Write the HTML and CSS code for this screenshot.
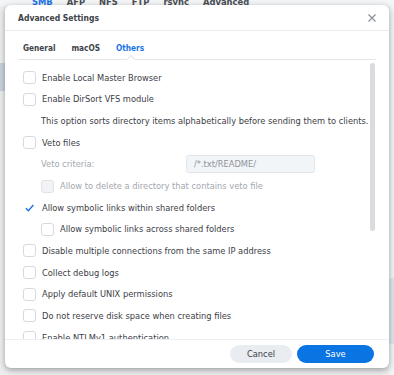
FILE: index.html
```html
<!DOCTYPE html>
<html>
<head>
<meta charset="utf-8">
<link rel="stylesheet" href="styles.css">
</head>
<body>
<div class="page">
  <div class="bg-tabs">
    <span class="bg-tab active">SMB</span><span class="bg-tab">AFP</span><span class="bg-tab">NFS</span><span class="bg-tab">FTP</span><span class="bg-tab">rsync</span><span class="bg-tab">Advanced</span>
  </div>
  <div class="bg-body">
    <div class="bg-side"></div>
    <div class="bg-right"><div class="bg-band"></div></div>
  </div>
</div>
<div class="dialog">
  <div class="dlg-header">
    <span class="dlg-title">Advanced Settings</span>
    <svg class="close" width="10" height="10" viewBox="0 0 10 10"><path d="M1.5 1.5L8.5 8.5M8.5 1.5L1.5 8.5" stroke="#8a9097" stroke-width="1.2" fill="none"/></svg>
  </div>
  <div class="tabs">
    <span class="tab">General</span>
    <span class="tab">macOS</span>
    <span class="tab active">Others</span>
  </div>
  <div class="tabline"><span class="notch"></span></div>
  <div class="content">
    <div class="row"><span class="cb"></span><span>Enable Local Master Browser</span></div>
    <div class="row"><span class="cb"></span><span>Enable DirSort VFS module</span></div>
    <div class="row indent"><span>This option sorts directory items alphabetically before sending them to clients.</span></div>
    <div class="row"><span class="cb"></span><span>Veto files</span></div>
    <div class="row indent field"><span class="muted label">Veto criteria:</span><span class="input">/*.txt/README/</span></div>
    <div class="row indent"><span class="cb disabled"></span><span class="muted">Allow to delete a directory that contains veto file</span></div>
    <div class="row"><span class="cb checked"><svg width="12" height="12" viewBox="0 0 12 12"><path d="M2 6.2L4.8 9L10.2 2.8" stroke="#1a73e8" stroke-width="1.5" fill="none"/></svg></span><span>Allow symbolic links within shared folders</span></div>
    <div class="row indent"><span class="cb"></span><span>Allow symbolic links across shared folders</span></div>
    <div class="row"><span class="cb"></span><span>Disable multiple connections from the same IP address</span></div>
    <div class="row"><span class="cb"></span><span>Collect debug logs</span></div>
    <div class="row"><span class="cb"></span><span>Apply default UNIX permissions</span></div>
    <div class="row"><span class="cb"></span><span>Do not reserve disk space when creating files</span></div>
    <div class="row"><span class="cb"></span><span>Enable NTLMv1 authentication</span></div>
    <div class="scrollthumb"></div>
  </div>
  <div class="footer">
    <button class="btn cancel">Cancel</button>
    <button class="btn save">Save</button>
  </div>
</div>
</body>
</html>
```
FILE: styles.css
```css
html, body {
  margin: 0;
  padding: 0;
}
body {
  width: 394px;
  height: 375px;
  overflow: hidden;
  background: #e4e5e7;
  font-family: "DejaVu Sans", Verdana, sans-serif;
  position: relative;
}
.page {
  height: 375px;
  background: #eceef0;
  display: flex;
  flex-direction: column;
}
.bg-tabs {
  display: flex;
  gap: 14px;
  height: 6px;
  overflow: hidden;
  padding-left: 32px;
  background: #f4f5f6;
  font-family: "DejaVu Sans", sans-serif;
  font-size: 8.4px;
  font-weight: bold;
  line-height: 5px;
  color: #4a4f55;
  flex: none;
}
.bg-tab.active {
  color: #1a73e8;
}
.bg-body {
  flex: 1;
  display: flex;
  justify-content: space-between;
}
.bg-side {
  width: 5px;
  height: 28px;
  margin-top: 57px;
  background: #c9d2dc;
}
.bg-right {
  width: 5px;
  background: #f2f3f5;
  padding-top: 272px;
}
.bg-band {
  height: 66px;
  background: #dfe5ec;
}
.dialog {
  position: absolute;
  left: 5px;
  top: 5px;
  width: 384px;
  height: 363px;
  background: #fff;
  border-radius: 6px;
  box-shadow: 0 2px 6px rgba(0,0,0,0.35);
  display: flex;
  flex-direction: column;
  overflow: hidden;
}
.dlg-header {
  height: 25px;
  flex: none;
  display: flex;
  align-items: center;
  justify-content: space-between;
  padding: 0 13px 0 13px;
  border-bottom: 1px solid #e8ebf0;
}
.dlg-title {
  font-family: "DejaVu Sans Condensed", "DejaVu Sans", sans-serif;
  font-size: 8.5px;
  font-weight: bold;
  color: #3d4248;
}
.close {
  margin-right: -1px;
}
.tabs {
  display: flex;
  gap: 16px;
  padding: 0 18px;
  height: 28px;
  align-items: center;
  flex: none;
  padding-top: 5px;
  box-sizing: border-box;
}
.tab {
  font-family: "DejaVu Sans Condensed", "DejaVu Sans", sans-serif;
  font-size: 8.2px;
  font-weight: bold;
  color: #3d4248;
}
.tab.active {
  color: #1a73e8;
}
.tabline {
  height: 1px;
  margin: 0 13px;
  background: #e3e7ec;
  position: relative;
  flex: none;
}
.notch {
  position: absolute;
  left: 110px;
  top: -3px;
  width: 5px;
  height: 5px;
  background: #fff;
  border-left: 1px solid #e3e7ec;
  border-top: 1px solid #e3e7ec;
  transform: rotate(45deg);
}
.content {
  flex: 1;
  position: relative;
  overflow: hidden;
  padding-top: 7px;
  border-bottom: 1px solid #eceff3;
}
.row {
  height: 21.65px;
  display: flex;
  align-items: center;
  padding-left: 18px;
  font-size: 8.3px;
  color: #3b4046;
  white-space: nowrap;
}
.row.indent {
  padding-left: 36px;
}
.cb {
  width: 11px;
  height: 11px;
  border: 1px solid #d6dae0;
  border-radius: 3px;
  margin-right: 6px;
  flex: none;
  background: #fff;
  display: flex;
  align-items: center;
  justify-content: center;
}
.cb.disabled {
  background: #f1f3f6;
  border-color: #dfe3e8;
}
.cb.checked {
  border-color: transparent;
}
.muted {
  color: #a3a8ae;
}
.label {
  width: 145px;
}
.input {
  width: 120px;
  height: 16px;
  line-height: 16px;
  padding-left: 7px;
  background: #f2f5f8;
  border: 1px solid #e1e6eb;
  border-radius: 3px;
  color: #8d939a;
}
.scrollthumb {
  position: absolute;
  left: 365px;
  top: 3px;
  width: 5px;
  height: 168px;
  border-radius: 3px;
  background: #d9dbde;
}
.footer {
  height: 28px;
  flex: none;
  display: flex;
  align-items: center;
  justify-content: flex-end;
  gap: 5px;
  padding-right: 15px;
}
.btn {
  height: 18px;
  border: none;
  border-radius: 9px;
  font-family: "DejaVu Sans", Verdana, sans-serif;
  font-size: 8.3px;
  padding: 0;
}
.cancel {
  width: 62px;
  background: #e9edf1;
  color: #3b4046;
}
.save {
  width: 77px;
  background: #0a74e3;
  color: #fff;
}
```
